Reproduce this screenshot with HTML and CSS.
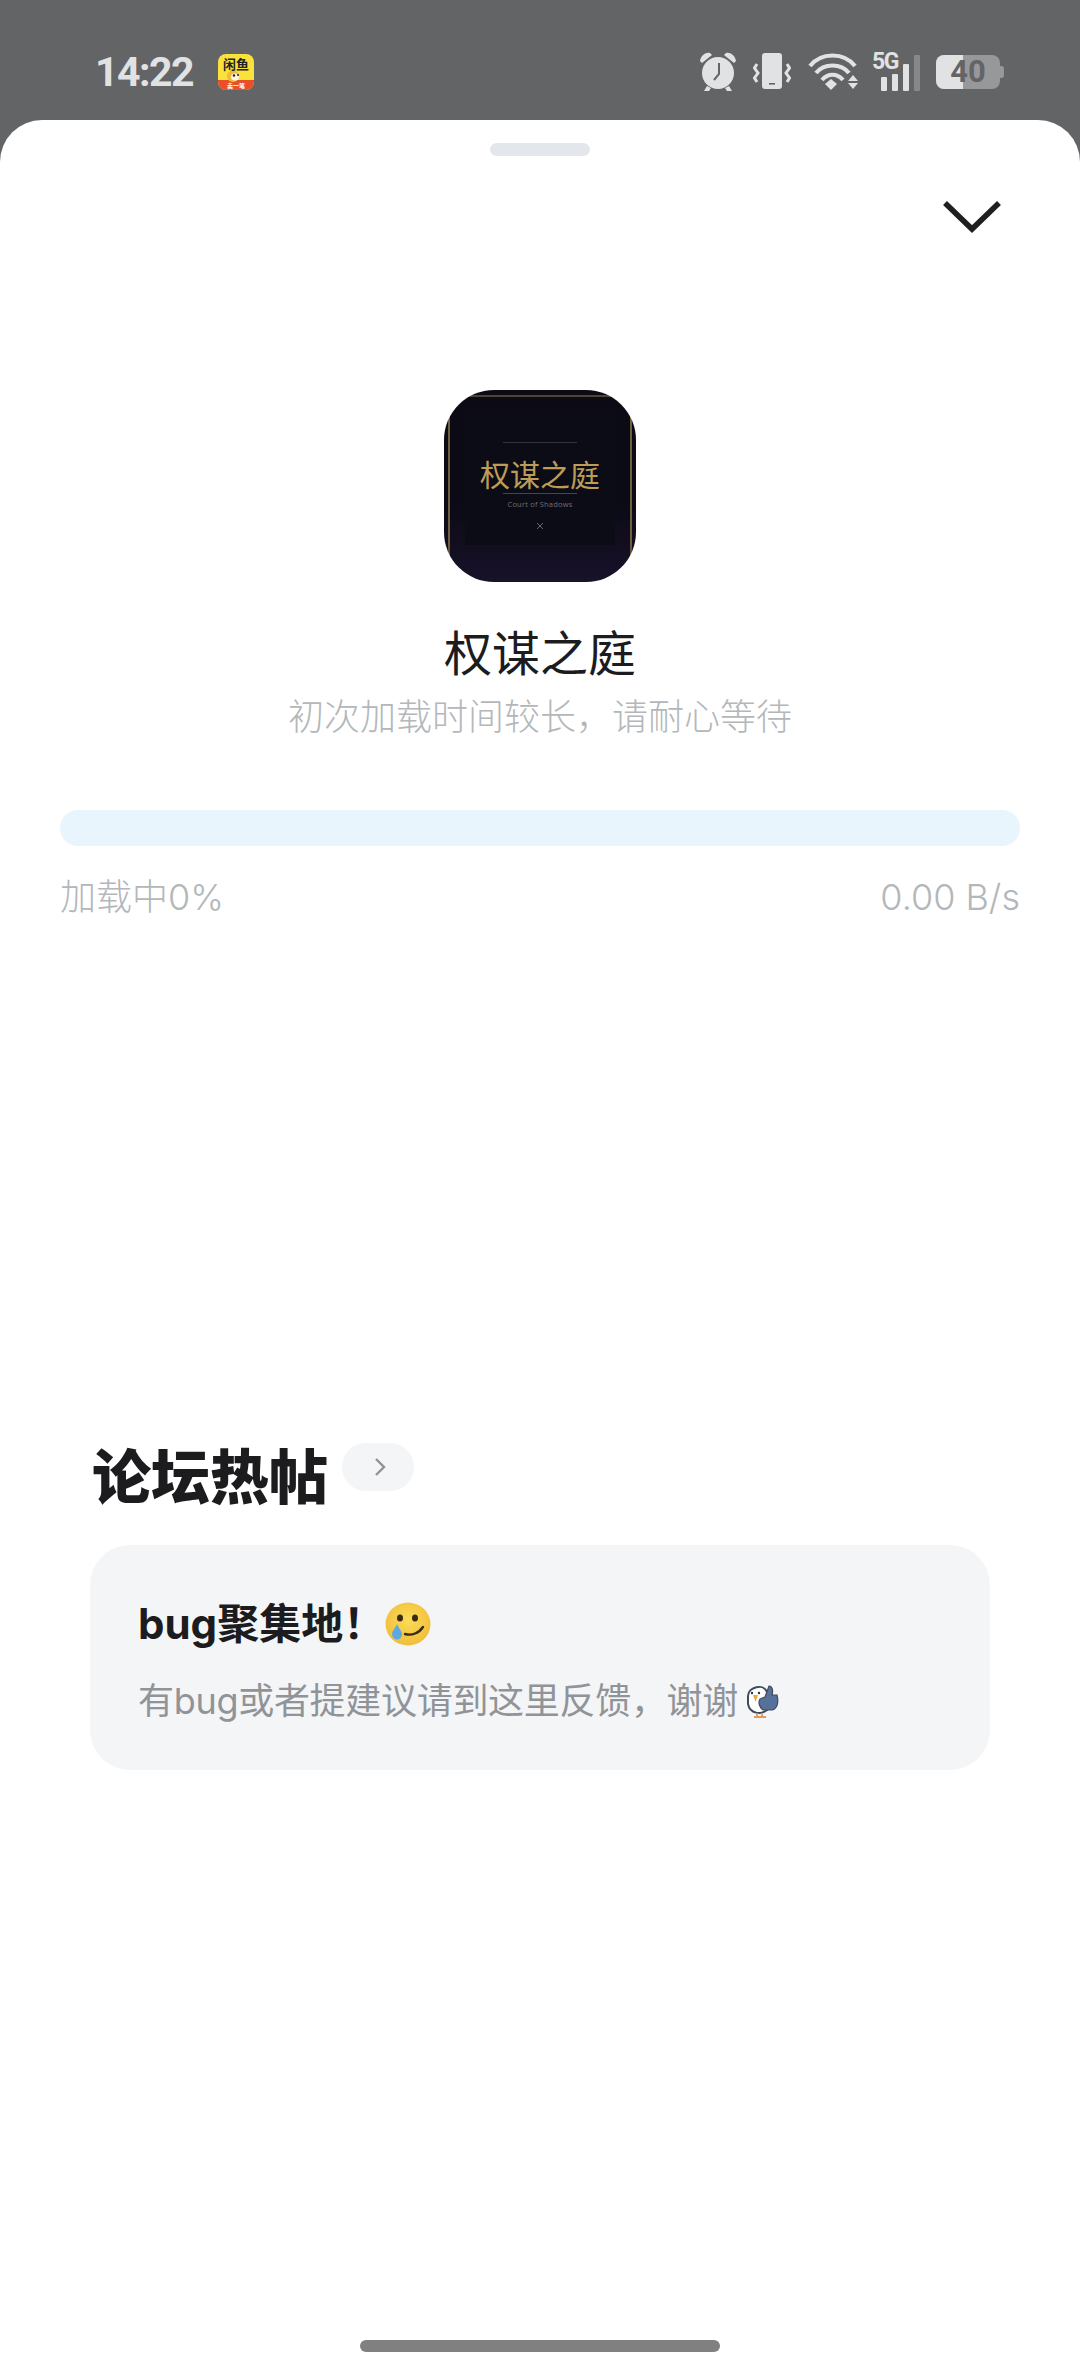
FILE: index.html
```html
<!DOCTYPE html>
<html lang="zh">
<head>
<meta charset="utf-8">
<title>权谋之庭</title>
<link rel="stylesheet" href="styles.css">
</head>
<body>
<div class="status">
  <span class="time">14:22</span>
  <svg class="appicon" width="36" height="36" viewBox="0 0 36 36">
    <defs><clipPath id="ac"><rect width="36" height="36" rx="8"/></clipPath></defs>
    <g clip-path="url(#ac)">
      <rect width="36" height="36" fill="#f9e23c"/>
      <rect y="26" width="36" height="10" fill="#e8502c"/>
      <circle cx="15" cy="22" r="6" fill="#f3b93a"/>
      <ellipse cx="17" cy="23" rx="4" ry="3.500" fill="#fdf8e2"/>
      <circle cx="16" cy="21.500" r="1.200" fill="#222"/>
      <circle cx="20" cy="21" r="1" fill="#222"/>
      <text x="18" y="15" class="appicon-t">闲鱼</text>
      <text x="18" y="34" class="appicon-b">卖一笔</text>
    </g>
  </svg>
  <div class="status-right">
    <svg class="si" width="38" height="40" viewBox="0 0 38 40" fill="#e1e2e3">
      <circle cx="19" cy="21" r="16"/>
      <path d="M1 9 C2 3 7 0 11 1 L13 3 L3 11 Z M37 9 C36 3 31 0 27 1 L25 3 L35 11 Z"/>
      <path d="M8 34 L5 39 L10 39 L12 36 Z M30 34 L33 39 L28 39 L26 36 Z"/>
      <path d="M20 11 V22 L15 28" fill="none" stroke="#636466" stroke-width="2"/>
    </svg>
    <svg class="si" width="38" height="38" viewBox="0 0 38 38" fill="#e1e2e3">
      <rect x="9" y="0" width="20" height="36" rx="3"/>
      <rect x="16" y="30" width="6" height="1.600" fill="#636466"/>
      <path d="M4 11 L1.500 15 L5 20 L1.500 25 L4 29 M34 11 L36.500 15 L33 20 L36.500 25 L34 29" fill="none" stroke="#e1e2e3" stroke-width="3"/>
    </svg>
    <svg class="si wifi" width="50" height="38" viewBox="0 0 50 38" fill="none" stroke="#e1e2e3" stroke-width="4.200">
      <path d="M2 13 C13 -1 36 -1 47 13"/>
      <path d="M8 20 C16 10 33 10 41 20"/>
      <path d="M14 27 C20 20 29 20 35 27"/>
      <path d="M17 31 L23 26 L29 31 L23 37 Z" fill="#e1e2e3" stroke="none"/>
      <path d="M40 28 L45 22 L50 28 Z M40 30 L45 36 L50 30 Z" fill="#e1e2e3" stroke="none"/>
    </svg>
    <div class="signal">
      <span class="fiveg">5G</span>
      <span class="bar b1"></span>
      <span class="bar b2"></span>
      <span class="bar b3"></span>
      <span class="bar b4"></span>
    </div>
    <div class="battery">
      <div class="battery-body"><span class="battery-fill"></span><span class="battery-num">40</span></div>
      <span class="battery-cap"></span>
    </div>
  </div>
</div>
<main class="sheet">
  <div class="grip"></div>
  <div class="close-row">
    <svg width="58" height="36" viewBox="0 0 58 36" fill="none" stroke="#1f1f1f" stroke-width="5.600">
      <path d="M2 6 L29 32 L56 6"/>
    </svg>
  </div>
  <div class="game">
    <div class="game-icon">
      <div class="game-inner">
        <span class="rule rule-top"></span>
        <span class="game-name">权谋之庭</span>
        <span class="rule rule-bottom"></span>
        <span class="game-en">Court of Shadows</span>
        <svg class="game-mark" width="8" height="8" viewBox="0 0 8 8" fill="none" stroke="#6a6864" stroke-width="1"><path d="M1 1 L7 7 M7 1 L1 7"/></svg>
      </div>
    </div>
    <h1 class="title">权谋之庭</h1>
    <p class="subtitle">初次加载时间较长，请耐心等待</p>
  </div>
  <div class="progress">
    <div class="track"></div>
    <div class="progress-labels"><span>加载中0%</span><span>0.00 B/s</span></div>
  </div>
  <section class="forum">
    <div class="forum-head">
      <h2 class="forum-title">论坛热帖</h2>
      <span class="pill">
        <svg width="12" height="20" viewBox="0 0 12 20" fill="none" stroke="#8f9296" stroke-width="2.400"><path d="M2 2 L10 10 L2 18"/></svg>
      </span>
    </div>
    <article class="card">
      <div class="card-title">
        <span>bug聚集地！</span>
        <svg class="emoji" width="46" height="44" viewBox="0 0 46 44">
          <defs><radialGradient id="eg" cx="50%" cy="40%" r="60%"><stop offset="0" stop-color="#fbdc55"/><stop offset="1" stop-color="#f0bd3c"/></radialGradient></defs>
          <ellipse cx="23" cy="22" rx="22.500" ry="21.500" fill="url(#eg)"/>
          <ellipse cx="15" cy="16" rx="3" ry="3.600" fill="#3c2a14"/>
          <ellipse cx="30" cy="16" rx="3" ry="3.600" fill="#3c2a14"/>
          <path d="M20 32 C27 34 34 31 38 25" fill="none" stroke="#3c2a14" stroke-width="2.400" stroke-linecap="round"/>
          <path d="M12 22 C10 27 7 29 7 32 A5 5.500 0 0 0 17 32 C17 29 14 27 12 22 Z" fill="#5aa9e0"/>
        </svg>
      </div>
      <div class="card-desc">
        <span>有bug或者提建议请到这里反馈，谢谢</span>
        <svg class="sticker" width="33" height="34" viewBox="0 0 33 34">
          <path d="M2 12 C2 3 18 -1 21 8 L21 26 C15 31 4 30 2 20 Z" fill="#fff" stroke="#3f4a5c" stroke-width="2"/>
          <path d="M14 15 L19 13 L23 2 C27 2 27 8 26 11 L31 11 C33 19 31 25 26 26 L17 26 C13 23 12 18 14 15 Z" fill="#58719b" stroke="#3f4a5c" stroke-width="1.200"/>
          <path d="M7 11 L12 11 L9.500 18 Z" fill="#eaa648"/>
          <circle cx="6" cy="9" r="1.200" fill="#333"/>
          <circle cx="13" cy="9" r="1.200" fill="#333"/>
          <path d="M11 29 V33 M8 33 H15 M16 29 V33 M14 33 H20" stroke="#e59a5c" stroke-width="1.800" fill="none"/>
        </svg>
      </div>
    </article>
  </section>
  <div class="spacer"></div>
  <div class="home-bar"></div>
</main>
</body>
</html>
```
FILE: styles.css
```css
* { box-sizing: border-box; }
html, body { margin: 0; padding: 0; }
body {
  width: 1080px;
  height: 2373px;
  background: #636466;
  font-family: Inter, "Noto Sans CJK SC", sans-serif;
  display: flex;
  flex-direction: column;
  overflow: hidden;
}
.status {
  height: 120px;
  flex: none;
  display: flex;
  align-items: center;
  padding: 24px 76px 0 95px;
  color: #e1e2e3;
}
.time {
  font-family: Roboto, sans-serif;
  font-size: 41px;
  font-weight: 700;
  letter-spacing: -1.500px;
  line-height: 1;
  margin-right: 25px;
}
.appicon { flex: none; }
.appicon-t { font: 700 13px "Noto Sans CJK SC", sans-serif; fill: #222; text-anchor: middle; }
.appicon-b { font: 700 6px "Noto Sans CJK SC", sans-serif; fill: #fff; text-anchor: middle; }
.status-right {
  margin-left: auto;
  display: flex;
  align-items: center;
  gap: 16px;
}
.si { flex: none; display: block; }
.wifi { margin: 0 -2px 0 1px; }
.signal {
  width: 48px;
  height: 38px;
  position: relative;
  flex: none;
  display: flex;
  align-items: flex-end;
  justify-content: flex-end;
  gap: 5px;
}
.fiveg {
  position: absolute;
  left: 0;
  top: -1px;
  font: 700 23px/20px Roboto, sans-serif;
  letter-spacing: -1.500px;
  color: #e1e2e3;
}
.bar { width: 6px; background: #e1e2e3; border-radius: 1px; display: block; }
.b1 { height: 14px; }
.b2 { height: 17px; }
.b3 { height: 27px; }
.b4 { height: 36px; background: #87888a; }
.battery {
  display: flex;
  align-items: center;
  flex: none;
}
.battery-body {
  width: 64px;
  height: 34px;
  border-radius: 8px;
  background: #97989a;
  position: relative;
  display: flex;
  align-items: center;
  justify-content: center;
}
.battery-fill {
  position: absolute;
  left: 0;
  top: 0;
  bottom: 0;
  width: 27px;
  border-radius: 8px 0 0 8px;
  background: #e1e2e3;
}
.battery-num {
  position: relative;
  font: 700 31px/34px Roboto, sans-serif;
  color: #636466;
}
.battery-cap {
  width: 4px;
  height: 12px;
  border-radius: 0 3px 3px 0;
  background: #97989a;
}
.sheet {
  flex: 1;
  background: #fff;
  border-radius: 42px 42px 0 0;
  display: flex;
  flex-direction: column;
  position: relative;
}
.grip {
  width: 100px;
  height: 13px;
  border-radius: 7px;
  background: #e3e6ea;
  margin: 23px auto 0;
  flex: none;
}
.close-row {
  display: flex;
  justify-content: flex-end;
  padding-right: 79px;
  margin-top: 41px;
  height: 36px;
}
.game {
  margin-top: 157px;
  display: flex;
  flex-direction: column;
  align-items: center;
}
.game-icon {
  width: 192px;
  height: 192px;
  border-radius: 50px;
  background:
    linear-gradient(#4d4433, #4d4433) 24px 5px / 144px 2px no-repeat,
    linear-gradient(#0b0a14 0, #6e5f40 12%, #6e5f40 80%, #1a1428 100%) 4px 0 / 2px 100% no-repeat,
    linear-gradient(#0b0a14 0, #6e5f40 12%, #6e5f40 80%, #1a1428 100%) 186px 0 / 2px 100% no-repeat,
    linear-gradient(#0c0a14, #0c0a16 60%, #18122a);
  display: flex;
  align-items: flex-start;
  justify-content: center;
}
.game-inner {
  width: 150px;
  height: 135px;
  margin-top: 20px;
  background: #0c0c17;
  display: flex;
  flex-direction: column;
  align-items: center;
  padding-top: 32px;
}
.rule { display: block; height: 1px; background: #34323c; width: 74px; flex: none; }
.rule-bottom { background: #4c4638; margin-top: -2px; }
.game-name {
  font: 400 30px/44px "Noto Sans CJK SC", sans-serif;
  color: #bd9d55;
  white-space: nowrap;
  margin-top: 8px;
  height: 44px;
}
.game-en {
  font: 400 7.500px/10px "Open Sans", sans-serif;
  color: #6f6e70;
  margin-top: 5px;
  letter-spacing: 0.2px;
  white-space: nowrap;
}
.game-mark {
  display: block;
  flex: none;
  margin-top: 13px;
}
.title {
  margin: 37px 0 0;
  font: 400 48px/62px "Noto Sans CJK SC", sans-serif;
  color: #1c1c1e;
}
.subtitle {
  margin: 9px 0 0;
  font: 300 36px/48px "Noto Sans CJK SC", sans-serif;
  color: #b4b7ba;
}
.progress {
  margin-top: 72px;
  padding: 0 60px;
}
.track {
  height: 36px;
  border-radius: 18px;
  background: #e8f5fd;
}
.progress-labels {
  margin-top: 28px;
  display: flex;
  justify-content: space-between;
  font: 300 36px/46px Inter, "Noto Sans CJK SC", sans-serif;
  color: #b4b7ba;
}
.forum {
  margin-top: 512px;
  padding: 0 90px;
}
.forum-head {
  display: flex;
  align-items: center;
  gap: 14px;
  padding-left: 2px;
}
.forum-title {
  margin: 0;
  font: 900 59px/84px "Noto Sans CJK SC", sans-serif;
  color: #1c1c1e;
}
.pill {
  width: 72px;
  height: 48px;
  border-radius: 24px;
  background: #f4f5f7;
  display: flex;
  align-items: center;
  justify-content: center;
  margin-top: -14px;
  padding-left: 3px;
}
.card {
  margin-top: 29px;
  height: 225px;
  border-radius: 40px;
  background: #f4f5f7;
  padding: 51px 48px 0;
}
.card-title {
  display: flex;
  align-items: center;
  gap: 0;
  font: 700 42px/56px Inter, "Noto Sans CJK SC", sans-serif;
  color: #1c1c1e;
}
.emoji { flex: none; }
.card-desc {
  margin-top: 24px;
  display: flex;
  align-items: center;
  gap: 8px;
  font: 400 36px/50px Inter, "Noto Sans CJK SC", sans-serif;
  letter-spacing: -0.3px;
  color: #909498;
}
.sticker { flex: none; }
.spacer { flex: 1; }
.home-bar {
  width: 360px;
  height: 12px;
  border-radius: 6px;
  background: #808080;
  margin: 0 auto 21px;
  flex: none;
}
```
